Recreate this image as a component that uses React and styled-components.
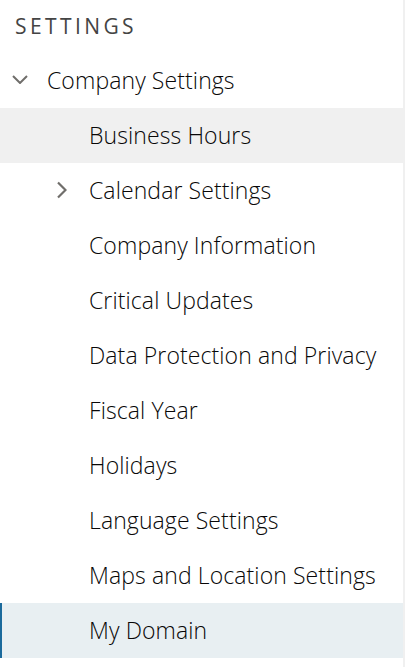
import React from "react";
import styled, { createGlobalStyle } from "styled-components";

const Global = createGlobalStyle`
  html, body { margin: 0; padding: 0; background: #f0f0f0; }
  body { font-family: "Open Sans", "Liberation Sans", sans-serif; }
`;

const Panel = styled.nav`
  width: 403px;
  height: 667px;
  background: #ffffff;
  box-sizing: border-box;
`;

const Header = styled.div`
  height: 53px;
  display: flex;
  align-items: center;
  padding: 0 0 2px 15px;
  box-sizing: border-box;
  font-size: 21px;
  font-weight: 400;
  letter-spacing: 3.4px;
  color: #444444;
  text-transform: uppercase;
`;

const Group = styled.button`
  width: 100%;
  height: 55px;
  display: flex;
  align-items: center;
  padding: 0 0 2px 12px;
  border: 0;
  background: transparent;
  font: inherit;
  font-size: 23px;
  font-weight: 300;
  letter-spacing: 0.1px;
  color: #080707;
  cursor: pointer;
  text-align: left;
`;

const IconSlot = styled.span`
  width: ${(p) => p.$w}px;
  display: inline-flex;
  align-items: center;
  flex: none;
`;

const List = styled.ul`
  list-style: none;
  margin: 0;
  padding: 0;
`;

const Item = styled.li`
  height: 55px;
  display: flex;
  align-items: center;
  box-sizing: border-box;
  padding: 0 0 2px ${(p) => (p.$selected ? 54 : 56)}px;
  font-size: 23px;
  font-weight: 300;
  letter-spacing: 0.1px;
  color: #080707;
  background: ${(p) =>
    p.$selected ? "#e8eff2" : p.$hover ? "#f0f0f0" : "transparent"};
  border-left: ${(p) => (p.$selected ? "2px solid #1b6a9c" : "0")};
`;

const ChevronDown = () => (
  <svg width="16" height="9" viewBox="0 0 16 9" fill="none">
    <path d="M1 1 L8 8 L15 1" stroke="#706e6b" strokeWidth="2" />
  </svg>
);

const ChevronRight = () => (
  <svg width="11" height="18" viewBox="0 0 11 18" fill="none">
    <path d="M2 1.5 L9.5 9 L2 16.5" stroke="#706e6b" strokeWidth="2.2" />
  </svg>
);

const items = [
  { label: "Business Hours", hover: true },
  { label: "Calendar Settings", expandable: true },
  { label: "Company Information" },
  { label: "Critical Updates" },
  { label: "Data Protection and Privacy" },
  { label: "Fiscal Year" },
  { label: "Holidays" },
  { label: "Language Settings" },
  { label: "Maps and Location Settings" },
  { label: "My Domain", selected: true },
];

export default function App() {
  return (
    <>
      <Global />
      <Panel>
        <Header>Settings</Header>
        <Group>
          <IconSlot $w={35}>
            <ChevronDown />
          </IconSlot>
          Company Settings
        </Group>
        <List>
          {items.map((it) => (
            <Item key={it.label} $selected={it.selected} $hover={it.hover}>
              <IconSlot $w={33}>{it.expandable && <ChevronRight />}</IconSlot>
              {it.label}
            </Item>
          ))}
        </List>
      </Panel>
    </>
  );
}
